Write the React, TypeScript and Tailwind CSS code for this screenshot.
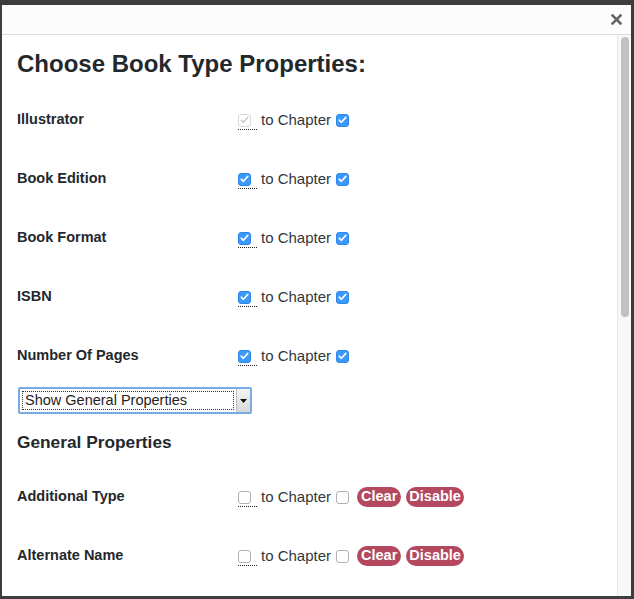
import React from "react";

const font = { fontFamily: '"Liberation Sans", Arial, Helvetica, sans-serif' };

function Box({ checked, disabled }: { checked?: boolean; disabled?: boolean }) {
  if (checked && !disabled) {
    return (
      <span className="inline-flex h-[13px] w-[13px] items-center justify-center rounded-[3px] bg-[#3b99fc] border border-[#2f86e8]">
        <svg width="9" height="8" viewBox="0 0 9 8">
          <path d="M1.2 4.2 L3.4 6.3 L7.8 1.4" stroke="white" strokeWidth="1.6" fill="none" strokeLinecap="round" strokeLinejoin="round" />
        </svg>
      </span>
    );
  }
  if (checked && disabled) {
    return (
      <span className="inline-flex h-[13px] w-[13px] items-center justify-center rounded-[3px] bg-white border border-[#d8d8d8]">
        <svg width="9" height="8" viewBox="0 0 9 8">
          <path d="M1.2 4.2 L3.4 6.3 L7.8 1.4" stroke="#c4c4c4" strokeWidth="1.4" fill="none" strokeLinecap="round" strokeLinejoin="round" />
        </svg>
      </span>
    );
  }
  return <span className="inline-block h-[13px] w-[13px] rounded-[3px] bg-white border border-[#b2b2b2]" />;
}

function Row({ label, first, second, firstDisabled, buttons, mb }: { label: string; first?: boolean; second?: boolean; firstDisabled?: boolean; buttons?: boolean; mb: string }) {
  return (
    <div className={`flex h-[20px] items-center ${mb}`}>
      <div className="w-[221px] text-[14.5px] font-bold text-[#23282d]">{label}</div>
      <span className="flex w-[19px] h-[20px] items-center border-b border-dotted border-[#222] pt-[1px]">
        <Box checked={first} disabled={firstDisabled} />
      </span>
      <span className="ml-[4px] text-[15px] text-[#32373c]">to Chapter</span>
      <span className="ml-[5px] flex items-center">
        <Box checked={second} />
      </span>
      {buttons && (
        <div className="ml-[8px] flex items-center gap-[5px]">
          <span className="rounded-full bg-[#b4485f] px-[4px] h-[20px] flex items-center text-[14.5px] font-bold text-white">Clear</span>
          <span className="rounded-full bg-[#b4485f] px-[3px] h-[20px] flex items-center text-[14.5px] font-bold text-white">Disable</span>
        </div>
      )}
    </div>
  );
}

export default function App() {
  return (
    <div className="h-[599px] w-[634px] overflow-hidden bg-[#3d3d3d] pt-[5px] pl-[2px] pr-[3px]" style={font}>
      <div className="flex h-[591px] flex-col bg-white">
        <div className="flex h-[30px] shrink-0 items-center justify-end border-b border-[#dddddd] bg-[#fcfcfc] pr-[9px]">
          <svg width="11" height="11" viewBox="0 0 11 11">
            <path d="M1.5 1.5 L9.5 9.5 M9.5 1.5 L1.5 9.5" stroke="#666" strokeWidth="2.6" strokeLinecap="square" />
          </svg>
        </div>
        <div className="flex min-h-0 flex-1">
          <div className="flex-1 overflow-hidden pl-[15px] pt-[14px]">
            <h1 className="h-[30px] leading-[30px] text-[24px] font-bold text-[#23282d]">Choose Book Type Properties:</h1>
            <div className="mt-[31px]">
              <Row label="Illustrator" first firstDisabled second mb="mb-[39px]" />
              <Row label="Book Edition" first second mb="mb-[39px]" />
              <Row label="Book Format" first second mb="mb-[39px]" />
              <Row label="ISBN" first second mb="mb-[39px]" />
              <Row label="Number Of Pages" first second mb="mb-[21px]" />
            </div>
            <div className="ml-[1px] flex h-[27px] w-[234px] items-stretch border-2 border-[#79abe4] bg-white rounded-[2px]">
              <div className="m-[2px] flex flex-1 items-center border border-dotted border-[#333] pl-[2px] text-[14.5px] text-[#222]">
                Show General Properties
              </div>
              <div className="flex w-[14px] items-center justify-center border-l border-[#bdbdbd] bg-gradient-to-b from-[#f4f4f4] to-[#d8d8d8]">
                <svg width="7" height="4" viewBox="0 0 7 4"><path d="M0 0 L7 0 L3.5 4 Z" fill="#111" /></svg>
              </div>
            </div>
            <h2 className="mt-[17px] h-[22px] leading-[22px] text-[17.3px] font-bold text-[#23282d]">General Properties</h2>
            <div className="mt-[34px]">
              <Row label="Additional Type" buttons mb="mb-[39px]" />
              <Row label="Alternate Name" buttons mb="mb-[39px]" />
            </div>
          </div>
          <div className="w-[14px] shrink-0 border-l border-[#e6e6e6] bg-[#f8f8f8] pt-[2px] pl-[3px]">
            <div className="h-[280px] w-[8px] rounded-full bg-[#c1c1c1]" />
          </div>
        </div>
      </div>
    </div>
  );
}
